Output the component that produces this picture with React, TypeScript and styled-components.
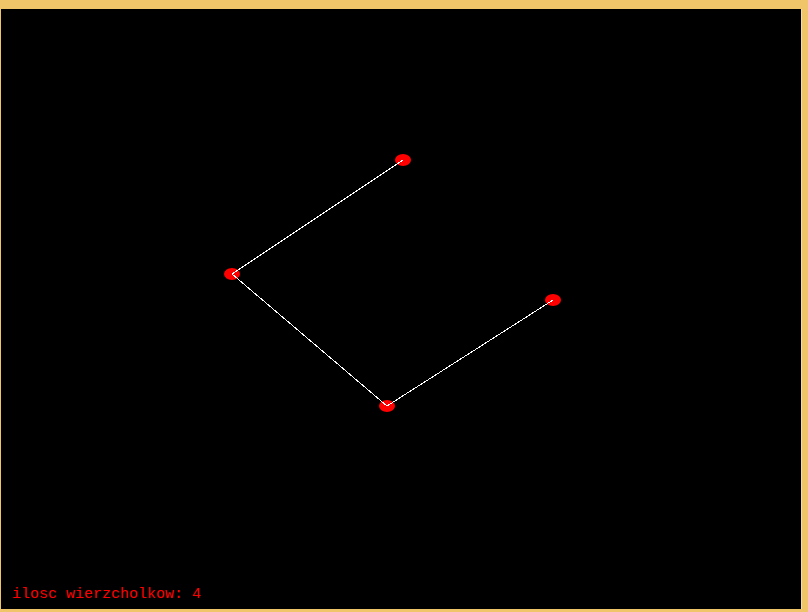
import React from 'react';
import styled, { createGlobalStyle } from 'styled-components';

type Point = { x: number; y: number };

const vertices: Point[] = [
  { x: 402, y: 151 },
  { x: 231, y: 265 },
  { x: 386, y: 397 },
  { x: 552, y: 291 },
];

const GlobalStyle = createGlobalStyle`
  html, body {
    margin: 0;
    padding: 0;
    background: #f0c468;
  }
  #root {
    width: 808px;
    height: 612px;
  }
`;

const Frame = styled.div`
  width: 808px;
  height: 612px;
  box-sizing: border-box;
  padding: 9px 0 0 1px;
`;

const Stage = styled.div`
  position: relative;
  box-sizing: border-box;
  width: 801px;
  height: 600px;
  background: #000;
  border-right: 1px solid #f8dba0;
  display: flex;
  flex-direction: column;
  justify-content: flex-end;
  padding: 0 0 7px 11px;
  overflow: hidden;
`;

const Canvas = styled.svg`
  position: absolute;
  left: 0;
  top: 0;
  width: 800px;
  height: 600px;
`;

const Counter = styled.div`
  position: relative;
  font-family: 'Liberation Mono', 'DejaVu Sans Mono', monospace;
  font-size: 15px;
  line-height: 15px;
  color: #ff0000;
  white-space: pre;
`;

export default function App() {
  const path = vertices.map((p) => `${p.x},${p.y}`).join(' ');

  return (
    <>
      <GlobalStyle />
      <Frame>
        <Stage>
          <Canvas viewBox="0 0 800 600">
            {vertices.map((p, i) => (
              <ellipse key={i} cx={p.x} cy={p.y} rx={8} ry={6} fill="#ff0000" />
            ))}
            <polyline
              points={path}
              fill="none"
              stroke="#ffffff"
              strokeWidth={1}
              shapeRendering="crispEdges"
            />
          </Canvas>
          <Counter>ilosc wierzcholkow: {vertices.length}</Counter>
        </Stage>
      </Frame>
    </>
  );
}
